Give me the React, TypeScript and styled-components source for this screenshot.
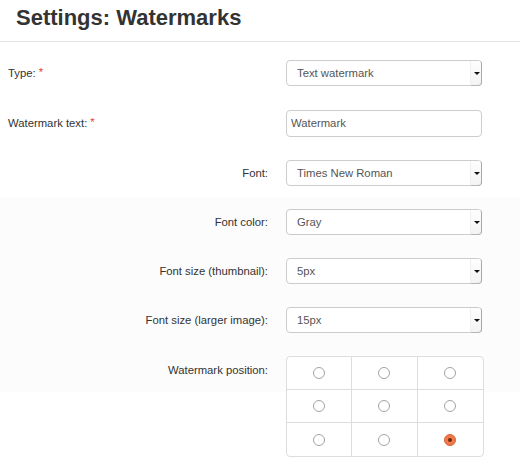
import React from "react";
import styled, { createGlobalStyle } from "styled-components";

const Global = createGlobalStyle`
  html, body { margin: 0; padding: 0; background: #fff; }
  body { font-family: "Liberation Sans", Arial, sans-serif; color: #333; }
`;

const Page = styled.div`
  width: 520px;
`;

const Header = styled.header`
  padding: 4px 16px 9px;
  border-bottom: 1px solid #e5e5e5;
`;

const Title = styled.h1`
  margin: 0;
  font-size: 22px;
  line-height: 28px;
  font-weight: bold;
  color: #333;
`;

const Form = styled.form`
  padding: 6px 8px 0;
  background: linear-gradient(
    to bottom,
    #fff 0,
    #fff 156px,
    #fcfcfc 156px,
    #fcfcfc 350px,
    #fff 350px
  );
`;

const Row = styled.div<{ $h: number; $top?: boolean }>`
  display: grid;
  grid-template-columns: 260px 198px;
  column-gap: 18px;
  height: ${(p) => p.$h}px;
  align-items: ${(p) => (p.$top ? "start" : "center")};
  padding-top: ${(p) => (p.$top ? 12 : 0)}px;
  box-sizing: border-box;
`;

const Label = styled.label<{ $align: "left" | "right" }>`
  font-size: 11.3px;
  line-height: 28px;
  color: #333;
  text-align: ${(p) => p.$align};
`;

const Req = styled.span`
  color: #e0403a;
  margin-left: 3px;
  position: relative;
  top: -1px;
`;

const SelectWrap = styled.div`
  position: relative;
  width: 196px;
  height: 26px;
`;

const Select = styled.select`
  appearance: none;
  -webkit-appearance: none;
  width: 100%;
  height: 100%;
  box-sizing: border-box;
  border: 1px solid #ccc;
  border-radius: 4px;
  background: #fff;
  padding: 0 16px 0 10px;
  font-family: "Liberation Sans", Arial, sans-serif;
  font-size: 11.3px;
  color: #555;
  outline: none;
`;

const Arrow = styled.span`
  position: absolute;
  top: 1px;
  right: 0;
  bottom: 0;
  width: 12px;
  box-sizing: border-box;
  background: linear-gradient(to bottom, #fefefe, #f3f3f3);
  border-left: 1px solid #f0f0f0;
  border-right: 1px solid #a8a8a8;
  border-bottom: 1px solid #b5b5b5;
  border-radius: 0 3px 4px 0;
  pointer-events: none;
  &::after {
    content: "";
    position: absolute;
    left: 3px;
    top: 11px;
    border-left: 3px solid transparent;
    border-right: 3px solid transparent;
    border-top: 3px solid #111;
  }
`;

const TextInput = styled.input`
  width: 196px;
  height: 27px;
  box-sizing: border-box;
  border: 1px solid #ccc;
  border-radius: 4px;
  padding: 0 4px;
  font-family: "Liberation Sans", Arial, sans-serif;
  font-size: 11.3px;
  color: #555;
  outline: none;
`;

const PosGrid = styled.div`
  display: grid;
  grid-template-columns: repeat(3, 1fr);
  grid-template-rows: repeat(3, 33px);
  width: 198px;
  box-sizing: border-box;
  border: 1px solid #ddd;
  border-radius: 4px;
  background: #fff;
  overflow: hidden;
`;

const Cell = styled.div<{ $lastCol: boolean; $lastRow: boolean }>`
  display: flex;
  align-items: center;
  justify-content: center;
  border-right: ${(p) => (p.$lastCol ? "none" : "1px solid #ddd")};
  border-bottom: ${(p) => (p.$lastRow ? "none" : "1px solid #ddd")};
`;

const Radio = styled.input`
  appearance: none;
  -webkit-appearance: none;
  margin: 0;
  width: 12px;
  height: 12px;
  border-radius: 50%;
  border: 1px solid #a3a3a3;
  background: #fff;
  position: relative;
  &:checked {
    border-color: #d4623a;
    background: #f07a4a;
  }
  &:checked::after {
    content: "";
    position: absolute;
    left: 3px;
    top: 3px;
    width: 4px;
    height: 4px;
    border-radius: 50%;
    background: #6b2a12;
  }
`;

type SelectRow = { label: string; value: string; options: string[] };

const SelectField = ({ value, options }: { value: string; options: string[] }) => (
  <SelectWrap>
    <Select defaultValue={value}>
      {options.map((o) => (
        <option key={o}>{o}</option>
      ))}
    </Select>
    <Arrow />
  </SelectWrap>
);

const fontRows: SelectRow[] = [
  { label: "Font:", value: "Times New Roman", options: ["Arial", "Times New Roman", "Verdana"] },
  { label: "Font color:", value: "Gray", options: ["Black", "Gray", "White"] },
  { label: "Font size (thumbnail):", value: "5px", options: ["5px", "10px", "15px"] },
  { label: "Font size (larger image):", value: "15px", options: ["5px", "10px", "15px"] },
];

export default function App() {
  const cells = Array.from({ length: 9 }, (_, i) => i);
  return (
    <Page>
      <Global />
      <Header>
        <Title>Settings: Watermarks</Title>
      </Header>
      <Form onSubmit={(e) => e.preventDefault()}>
        <Row $h={50}>
          <Label $align="left">
            Type:<Req>*</Req>
          </Label>
          <SelectField value="Text watermark" options={["Text watermark", "Image watermark"]} />
        </Row>
        <Row $h={50}>
          <Label $align="left">
            Watermark text:<Req>*</Req>
          </Label>
          <TextInput defaultValue="Watermark" />
        </Row>
        {fontRows.map((r) => (
          <Row $h={49} key={r.label}>
            <Label $align="right">{r.label}</Label>
            <SelectField value={r.value} options={r.options} />
          </Row>
        ))}
        <Row $h={120} $top>
          <Label $align="right">Watermark position:</Label>
          <PosGrid>
            {cells.map((i) => (
              <Cell key={i} $lastCol={i % 3 === 2} $lastRow={i >= 6}>
                <Radio type="radio" name="pos" defaultChecked={i === 8} />
              </Cell>
            ))}
          </PosGrid>
        </Row>
      </Form>
    </Page>
  );
}
